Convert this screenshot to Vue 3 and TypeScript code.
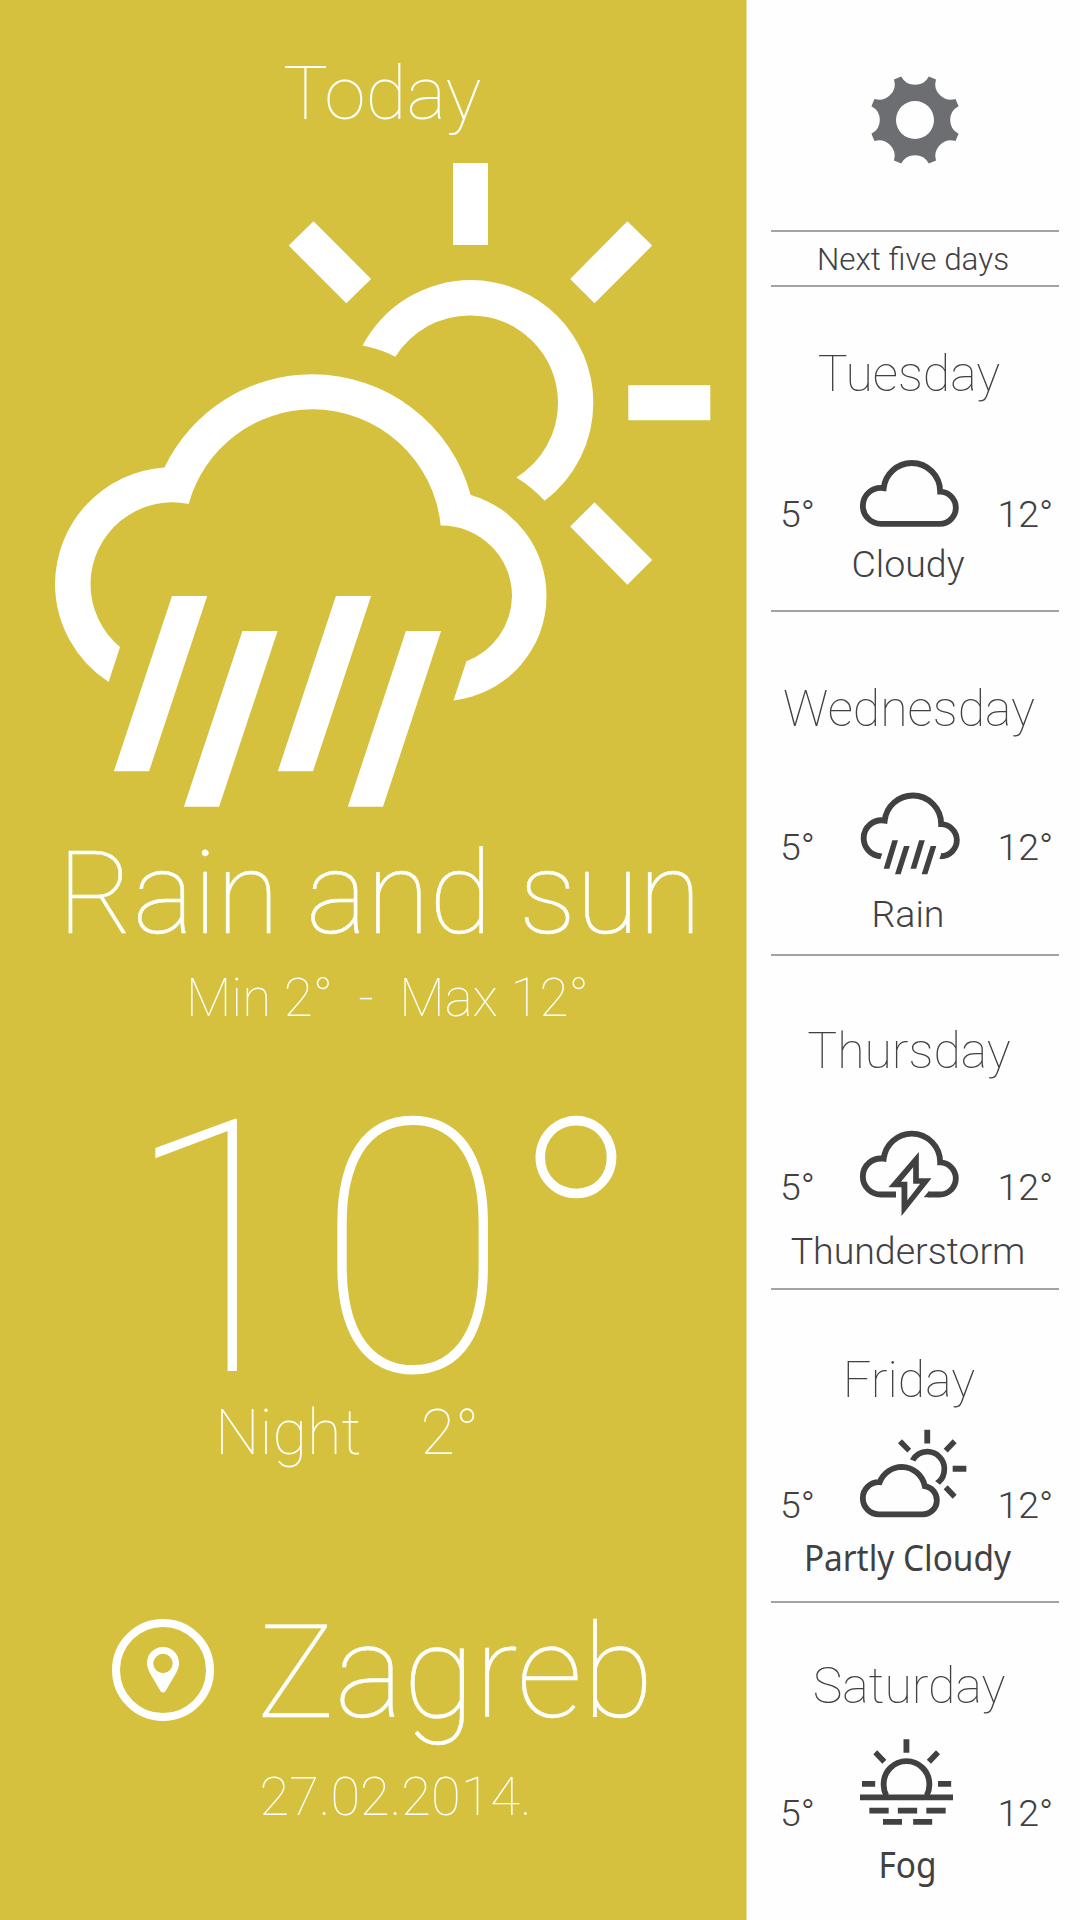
<script setup lang="ts">
interface Day {
  id: string
  name: string
  low: string
  high: string
  label: string
  viewBox: string
}

const days: Day[] = [
  { id: 'tuesday', name: 'Tuesday', low: '5°', high: '12°', label: 'Cloudy', viewBox: '345 351 345 348' },
  { id: 'wednesday', name: 'Wednesday', low: '5°', high: '12°', label: 'Rain', viewBox: '345 360 345 348' },
  { id: 'thursday', name: 'Thursday', low: '5°', high: '12°', label: 'Thunderstorm', viewBox: '345 360 345 348' },
  { id: 'friday', name: 'Friday', low: '5°', high: '12°', label: 'Partly Cloudy', viewBox: '345 325 345 348' },
  { id: 'saturday', name: 'Saturday', low: '5°', high: '12°', label: 'Fog', viewBox: '345 319 345 348' },
]

// Gear outline: eight round notches cut into a disc, joined by short tooth edges.
const polar = (deg: number): string => {
  const a = (deg * Math.PI) / 180
  return `${(45.7 * Math.cos(a)).toFixed(2)} ${(45.7 * Math.sin(a)).toFixed(2)}`
}
const gearPath: string =
  Array.from({ length: 8 }, (_, i) => {
    const c = i * 45
    return `${i ? 'L' : 'M'}${polar(c - 17.6)}A15.6 15.6 0 0 0 ${polar(c + 17.6)}`
  }).join('') + 'ZM19 0A19 19 0 1 0 -19 0A19 19 0 1 0 19 0Z'
</script>

<template>
  <div class="app">
    <main class="today">
      <h1 class="today-title">Today</h1>
      <svg class="today-icon" viewBox="0 140 747 680">
        <path d="M453 163h35v82h-35zM628.3 385.3h82v35h-82zM627.4 221.2L652.2 245.6L594.5 303.3L570.2 278.9ZM594.5 502.3L652.2 560L627.4 584.7L570.2 526.6ZM313.5 221.2L288.7 245.6L346.3 303.3L371.1 278.9Z" />
        <path d="M362.5 345.6A122.7 122.7 0 0 1 470.6 280.1A122.7 122.7 0 0 1 593.3 402.8A122.7 122.7 0 0 1 544.7 500.7Q532 487 516.4 477.4A87.4 87.4 0 0 0 558 402.8A87.4 87.4 0 0 0 470.6 315.4A87.4 87.4 0 0 0 395.4 356.7Q380 349 362.5 345.6Z" />
        <path d="M108.6 681.9A117.5 117.5 0 0 1 55 584A117.5 117.5 0 0 1 164.4 467.4A164.3 164.3 0 0 1 312.5 374.2A164.3 164.3 0 0 1 470.7 494.9A105 105 0 0 1 546.5 596A105 105 0 0 1 453.5 700.5L466.4 661.2A70.4 70.4 0 0 0 512 596A70.4 70.4 0 0 0 440.7 525.6A129 129 0 0 0 312.5 409.3A129 129 0 0 0 188.7 503.9A82 82 0 0 0 90.5 584A82 82 0 0 0 120 647Z" />
        <path d="M172 596h35.2L149.1 771.3h-35.2ZM242.4 631h35.2L219.1 806.7h-35.2ZM335.9 596h35.2L313 771.3h-35.2ZM405.9 631h35.2L383 806.7h-35.2Z" />
      </svg>
      <p class="condition">Rain and sun</p>
      <p class="range">Min 2°&nbsp; -&nbsp; Max 12°</p>
      <p class="temperature">10°</p>
      <p class="night"><span>Night</span><span>2°</span></p>
      <div class="location">
        <svg class="pin" viewBox="0 0 102 102">
          <circle cx="51" cy="51" r="47" fill="none" stroke="#fff" stroke-width="8" />
          <path fill-rule="evenodd" d="M51 28C42 28 35 35 35 44.300C35 49 37 52.500 39 56L48.600 72.200Q51 75 53.400 72.200L63 56C65 52.500 67 49 67 44.300C67 35 60 28 51 28ZM51 34.800A9.700 9.700 0 1 1 51 54.200A9.700 9.700 0 1 1 51 34.800Z" />
        </svg>
        <span class="city">Zagreb</span>
      </div>
      <p class="date">27.02.2014.</p>
    </main>

    <aside class="forecast">
      <div class="settings">
        <svg class="gear" viewBox="-46 -46 92 92"><path :d="gearPath" fill-rule="evenodd" /></svg>
      </div>
      <h2 class="heading">Next five days</h2>
      <section v-for="day in days" :key="day.id" class="day" :class="day.id">
        <h3 class="day-name">{{ day.name }}</h3>
        <div class="day-row">
          <span class="temp low">{{ day.low }}</span>
          <svg class="day-icon" :viewBox="day.viewBox">
            <path v-if="day.id === 'tuesday'" class="line" d="M422.500 641.500A54 54 0 0 1 368.500 587.500A54 54 0 0 1 431 534.200A85.300 85.300 0 0 1 515 459A85.300 85.300 0 0 1 600.500 545A48.500 48.500 0 0 1 647.500 593A48.500 48.500 0 0 1 599 641.500Z" />
            <template v-else-if="day.id === 'wednesday'">
              <path class="line" d="M421 648.700A54 54 0 0 1 371 595A54 54 0 0 1 434 541.700A85.300 85.300 0 0 1 518.500 466.500A85.300 85.300 0 0 1 603.500 552.500A48.500 48.500 0 0 1 650.500 600.300A48.500 48.500 0 0 1 603 648.700" />
              <path d="M419 640.200H427L421 657.200H419ZM604 640.200H606V657.200H598ZM457 601h17L448 686h-17ZM492 618h17L482 702.500h-17ZM537.500 601h17L528.500 686h-17ZM572 618h17L562 702.500h-17Z" />
            </template>
            <template v-else-if="day.id === 'thursday'">
              <path class="line" d="M468 643.500H422.500A54 54 0 0 1 368.500 589.500A54 54 0 0 1 431 536.200A85.300 85.300 0 0 1 515 461A85.300 85.300 0 0 1 600.500 547A48.500 48.500 0 0 1 647.500 595A48.500 48.500 0 0 1 599 643.500H564" />
              <path fill-rule="evenodd" d="M565 635H567V652H551ZM536.500 516V595H574.500L484.500 708V622H445.500ZM519.500 562L483 605.500H502V661L540.500 611.500H519.500Z" />
            </template>
            <template v-else-if="day.id === 'friday'">
              <path class="line" d="M416.500 614A48 48 0 0 1 368.500 566A48 48 0 0 1 419 517.500A72 72 0 0 1 486 471.500A72 72 0 0 1 554.500 529.500A42.500 42.500 0 0 1 590.500 571.500A42.500 42.500 0 0 1 548.500 614Z" />
              <path d="M510 449A59.500 59.500 0 0 1 562 417.500A59.500 59.500 0 0 1 621.500 477A60 60 0 0 1 600 525L585.500 514A43 43 0 0 0 604.500 477A42.500 42.500 0 0 0 562 434.500A43 43 0 0 0 526 455.500ZM553 360h17.500v41.500H553ZM638 468.500h41v17.500h-41ZM638 389L650 401L623 428.500L611 417ZM486 389L474 401L502 428.500L513.500 417ZM623 527L650 555L638 567L611 539Z" />
            </template>
            <template v-else>
              <path class="line" d="M439 528A68.500 68.500 0 0 1 431 493A68.500 68.500 0 0 1 568 493A68.500 68.500 0 0 1 560 528" />
              <path d="M360 524.500h279v17.500H360ZM490.500 358.500h17.500v41h-17.500ZM366 484h39.500v17.500H366ZM594 484h39.500v17.500H594ZM411.500 392L400 404L427 432L439 420ZM588 392L600 404L573 432L560.500 420ZM388 564h58v17.500h-58ZM473.500 564h58v17.500h-58ZM559 564h58v17.500h-58ZM429 598h57v17.500h-57ZM519.500 598h57v17.500h-57Z" />
            </template>
          </svg>
          <span class="temp high">{{ day.high }}</span>
        </div>
        <p class="day-label">{{ day.label }}</p>
      </section>
    </aside>
  </div>
</template>

<style>
body {
  margin: 0;
}
</style>

<style scoped>
.app {
  display: flex;
  width: 1080px;
  height: 1920px;
  overflow: hidden;
  background: #fefefe;
  font-family: Roboto, "Liberation Sans", sans-serif;
}

h1,
h2,
h3,
p {
  margin: 0;
  white-space: nowrap;
}

svg {
  display: block;
  flex: none;
}

/* Current conditions */
.today {
  display: flex;
  flex-direction: column;
  flex: none;
  width: 746px;
  border-right: 1px solid #e9df9d;
  background: #d5c13e;
  color: #fff;
  fill: #fff;
  font-weight: 100;
}

.today-title {
  margin: 56px 0 1px 283px;
  font-size: 75px;
  line-height: 75px;
  font-weight: 100;
}

.today-icon {
  width: 747px;
  height: 680px;
  margin-top: 8px;
}

.condition {
  margin: 16.200px 0 1px 58px;
  font-size: 115px;
  line-height: 115px;
  letter-spacing: -0.350px;
  -webkit-text-stroke: 0.500px #fff;
}

.range {
  margin: 20px 0 0 186px;
  font-size: 52.900px;
  line-height: 53px;
}

.temperature {
  margin: 75px 0 0 123px;
  font-size: 354px;
  line-height: 300px;
  letter-spacing: -1px;
}

.night {
  display: flex;
  gap: 59px;
  margin: 1.200px 0 0 215px;
  font-size: 63px;
  line-height: 63px;
}

.location {
  display: flex;
  align-items: flex-start;
  margin: 143.800px 0 0 112px;
}

.pin {
  width: 102px;
  height: 102px;
  margin-top: 11px;
}

.city {
  margin: 0 0 0 43px;
  font-size: 130px;
  line-height: 130px;
  -webkit-text-stroke: 0.500px #fff;
}

.date {
  margin: 31.600px 0 0 259.500px;
  font-size: 54.200px;
  line-height: 54px;
}

/* Forecast column */
.forecast {
  flex: 1;
  padding: 0 21px 0 24px;
  color: #414143;
  fill: #414143;
}

.settings {
  display: flex;
  justify-content: center;
  height: 230px;
}

.gear {
  width: 92px;
  height: 92px;
  margin-top: 73.500px;
  fill: #6d6e71;
}

.heading {
  box-sizing: border-box;
  height: 57px;
  padding-right: 4px;
  border-top: 2px solid #a3a3a3;
  border-bottom: 2px solid #a3a3a3;
  font-size: 31.400px;
  line-height: 55px;
  font-weight: 300;
  text-align: center;
}

.day {
  box-sizing: border-box;
  height: var(--height);
  padding-top: var(--name-top);
  border-bottom: 2px solid #a3a3a3;
}

.day-name {
  padding-right: 12px;
  font-size: 50px;
  line-height: 50px;
  font-weight: 100;
  text-align: center;
}

.day-row {
  display: flex;
  height: 116px;
  margin-top: var(--row-gap);
}

.temp {
  flex: none;
  padding-top: 68.200px;
  font-size: 37.500px;
  line-height: 38px;
  font-weight: 300;
}

.low {
  width: 75px;
  padding-left: 9px;
}

.day-icon {
  width: 115px;
  height: 116px;
}

.high {
  margin-left: 27.500px;
}

.line {
  fill: none;
  stroke: #414143;
  stroke-width: 17.500;
}

.day-label {
  margin-top: var(--label-gap);
  padding-right: 14px;
  font-size: 37.500px;
  line-height: 38px;
  font-weight: 300;
  text-align: center;
}

.tuesday {
  --height: 325px;
  --name-top: 61.600px;
  --row-gap: 28.400px;
  --label-gap: 2.200px;
}

.wednesday {
  --height: 344px;
  --name-top: 72.200px;
  --row-gap: 25.800px;
  --label-gap: 19.200px;
}

.thursday {
  --height: 334px;
  --name-top: 70.200px;
  --row-gap: 23.800px;
  --label-gap: 16.200px;
}

.friday {
  --height: 313px;
  --name-top: 65.200px;
  --row-gap: 13.100px;
  --label-gap: 3.600px;
}

.saturday {
  --height: 317px;
  --name-top: 57.900px;
  --row-gap: 15.100px;
  --label-gap: 2.900px;
  border-bottom: 0;
}

/* Slightly condensed humanist face for the last two labels */
.friday .day-label,
.saturday .day-label {
  padding-right: 16px;
  font-family: "Noto Sans", "Open Sans", sans-serif;
  font-size: 35.500px;
  font-weight: 400;
  transform: scaleX(0.94);
}
</style>
